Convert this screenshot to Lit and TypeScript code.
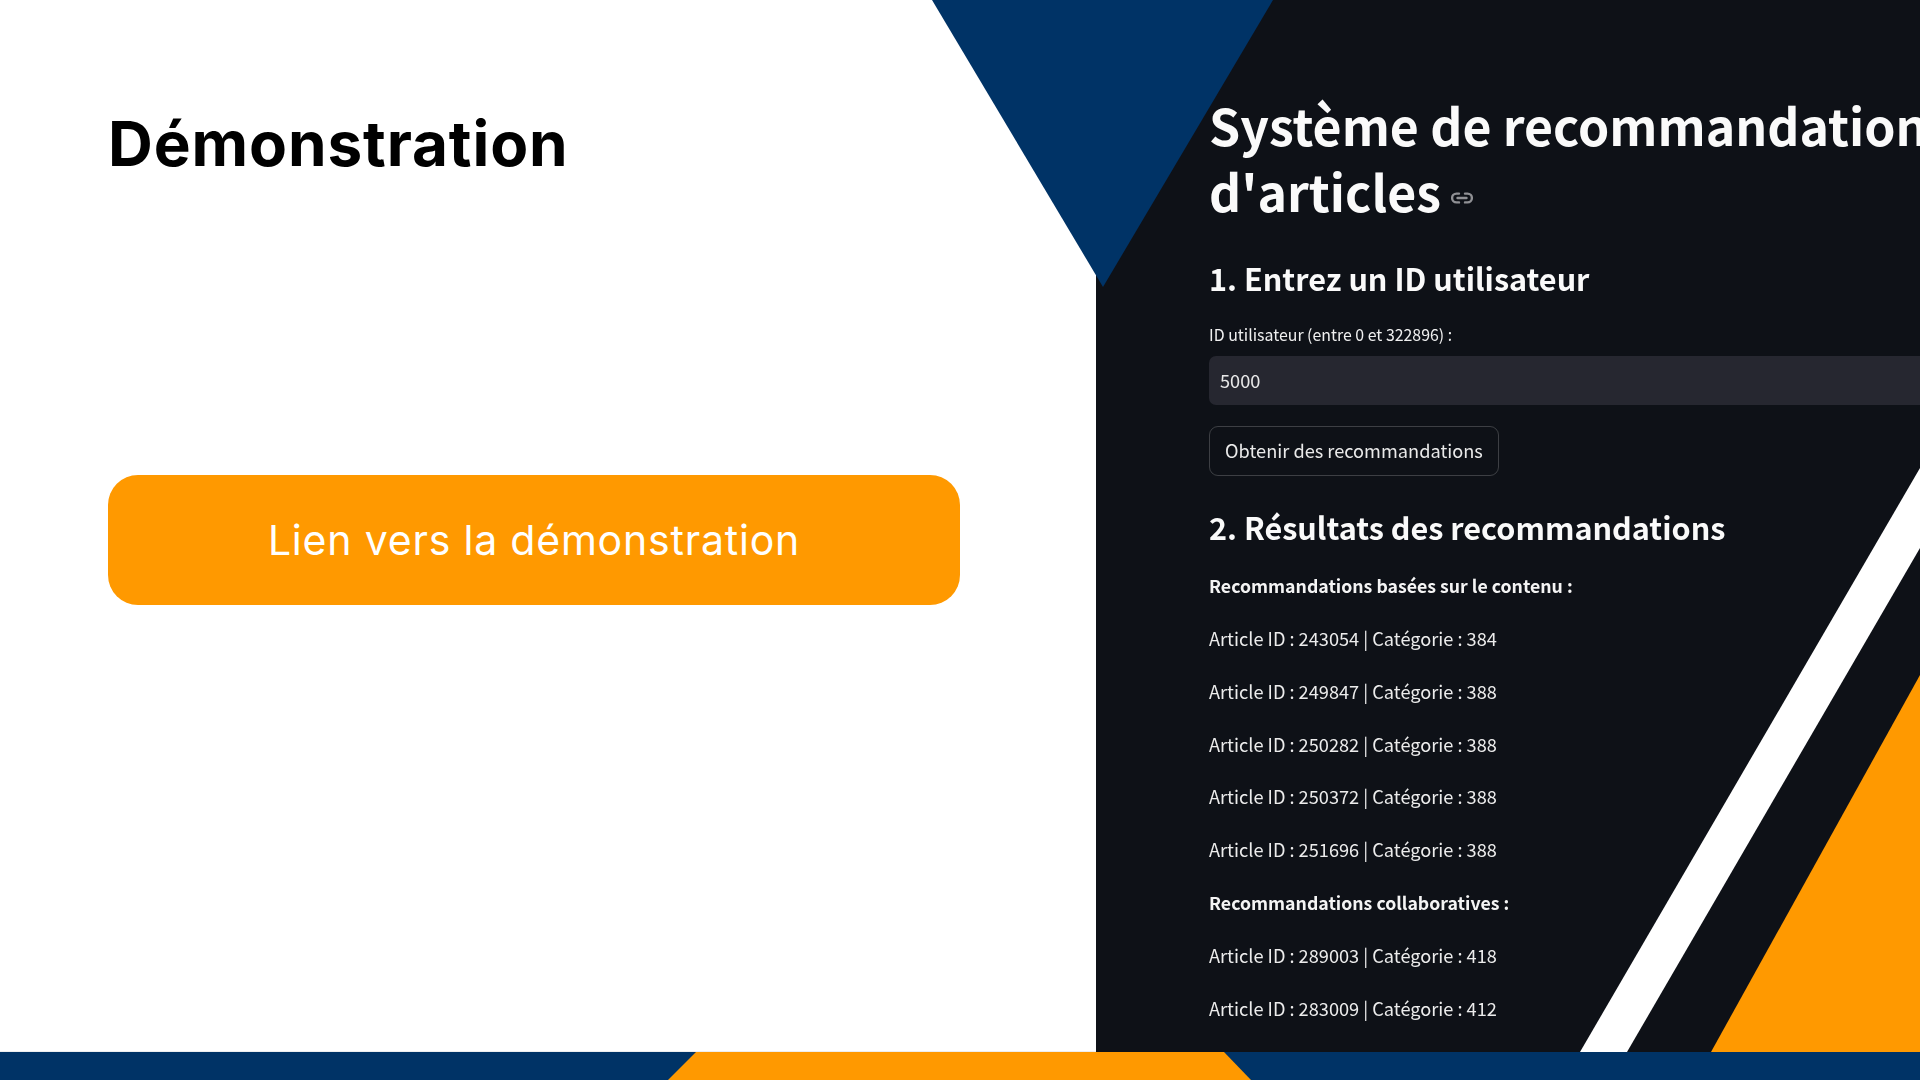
import { LitElement, html, css } from "lit";
import { customElement } from "lit/decorators.js";

const content = [
  "Article ID : 243054 | Catégorie : 384",
  "Article ID : 249847 | Catégorie : 388",
  "Article ID : 250282 | Catégorie : 388",
  "Article ID : 250372 | Catégorie : 388",
  "Article ID : 251696 | Catégorie : 388",
];
const collab = [
  "Article ID : 289003 | Catégorie : 418",
  "Article ID : 283009 | Catégorie : 412",
];

@customElement("app-root")
export class AppRoot extends LitElement {
  static styles = css`
    :host {
      display: block;
      width: 1920px;
      height: 1080px;
      overflow: hidden;
      position: relative;
      background: #fff;
      font-family: "Inter", "Liberation Sans", sans-serif;
    }
    .slide {
      display: grid;
      grid-template-rows: 1052px 28px;
      height: 100%;
    }
    .main {
      display: grid;
      grid-template-columns: 1096px 824px;
      min-height: 0;
    }
    .left {
      display: flex;
      flex-direction: column;
      padding: 109px 0 0 108px;
      box-shadow: inset 0 -1px 0 #eeeeee;
    }
    .title {
      margin: 0;
      font-size: 62px;
      line-height: 70px;
      font-weight: 700;
      letter-spacing: 0.9px;
      color: #000;
    }
    .cta {
      margin-top: 296px;
      width: 852px;
      height: 130px;
      border-radius: 30px;
      background: #ff9900;
      color: #fff;
      display: flex;
      align-items: center;
      justify-content: center;
      font-size: 41px;
      letter-spacing: 0.8px;
      font-weight: 400;
    }
    .panel {
      background: #0e1117;
      overflow: hidden;
      color: #fafafa;
      font-family: "Noto Sans CJK SC", "Noto Sans", sans-serif;
      min-width: 0;
    }
    .content {
      padding: 90.5px 0 0 113px;
      filter: blur(0.35px);
    }
    h1 {
      margin: 0;
      font-size: 50px;
      line-height: 66px;
      font-weight: 700;
      white-space: nowrap;
    }
    .anchor {
      display: inline-block;
      width: 22px;
      height: 12px;
      margin-left: 10px;
      vertical-align: 8px;
    }
    h2 {
      margin: 0;
      font-size: 30.6px;
      line-height: 40px;
      font-weight: 700;
      white-space: nowrap;
    }
    h2.first { margin-top: 35px; }
    h2.second { margin-top: 31px; }
    .label {
      margin-top: 25px;
      font-size: 15.9px;
      line-height: 24px;
      color: #f0f0f0;
    }
    .input {
      margin: 9px -20px 0 0;
      height: 49px;
      box-sizing: border-box;
      background: #262730;
      border-radius: 7px;
      display: flex;
      align-items: center;
      padding: 0 0 1px 11px;
      font-size: 18.2px;
      color: #e8e8e8;
    }
    .btn {
      margin-top: 21px;
      width: 290px;
      height: 50px;
      box-sizing: border-box;
      border: 1px solid rgba(250, 250, 250, 0.2);
      border-radius: 9px;
      display: flex;
      align-items: center;
      justify-content: center;
      padding-bottom: 2px;
      font-size: 18.2px;
      color: #eaeaea;
    }
    .results {
      margin-top: 12.5px;
      display: flex;
      flex-direction: column;
    }
    .row {
      height: 52.85px;
      line-height: 52.85px;
      font-size: 18.2px;
      color: #ececec;
      white-space: nowrap;
    }
    .row.head {
      font-size: 17.7px;
      font-weight: 700;
      color: #f4f4f4;
    }
    .row.cut { padding-left: 197px; }
    .footer {
      background: #003366;
      display: flex;
      padding-left: 668px;
    }
    .footer .mid {
      width: 583px;
      height: 100%;
      background: #ff9900;
      clip-path: polygon(28px 0, 556px 0, 100% 100%, 0 100%);
    }
    .deco {
      position: absolute;
      left: 0;
      top: 0;
      width: 1920px;
      height: 1052px;
      pointer-events: none;
    }
  `;

  render() {
    return html`
      <div class="slide">
        <div class="main">
          <section class="left">
            <h3 class="title">Démonstration</h3>
            <div class="cta">Lien vers la démonstration</div>
          </section>
          <section class="panel">
            <div class="content">
              <h1>
                Système de recommandation<br />d'articles<svg class="anchor" viewBox="0 0 22 12" fill="none" stroke="#8f9094" stroke-width="2.4" stroke-linecap="round">
                  <path d="M8 1.6H5.5a4.4 4.4 0 0 0 0 8.8H8" />
                  <path d="M14 1.6h2.5a4.4 4.4 0 0 1 0 8.8H14" />
                  <path d="M6.5 6h9" />
                </svg>
              </h1>
              <h2 class="first">1. Entrez un ID utilisateur</h2>
              <div class="label">ID utilisateur (entre 0 et 322896) :</div>
              <div class="input">5000</div>
              <div class="btn">Obtenir des recommandations</div>
              <h2 class="second">2. Résultats des recommandations</h2>
              <div class="results">
                <div class="row head">Recommandations basées sur le contenu :</div>
                ${content.map((r) => html`<div class="row">${r}</div>`)}
                <div class="row head">Recommandations collaboratives :</div>
                ${collab.map((r) => html`<div class="row">${r}</div>`)}
                <div class="row cut">|</div>
              </div>
            </div>
          </section>
        </div>
        <footer class="footer"><div class="mid"></div></footer>
      </div>
      <svg class="deco" viewBox="0 0 1920 1052" aria-hidden="true">
        <polygon points="932,0 1273,0 1103,287" fill="#003366" />
        <polygon points="1920,468 1920,548 1627,1052 1580,1052" fill="#fff" />
        <polygon points="1920,675 1920,1052 1711,1052" fill="#ff9900" />
      </svg>
    `;
  }
}
